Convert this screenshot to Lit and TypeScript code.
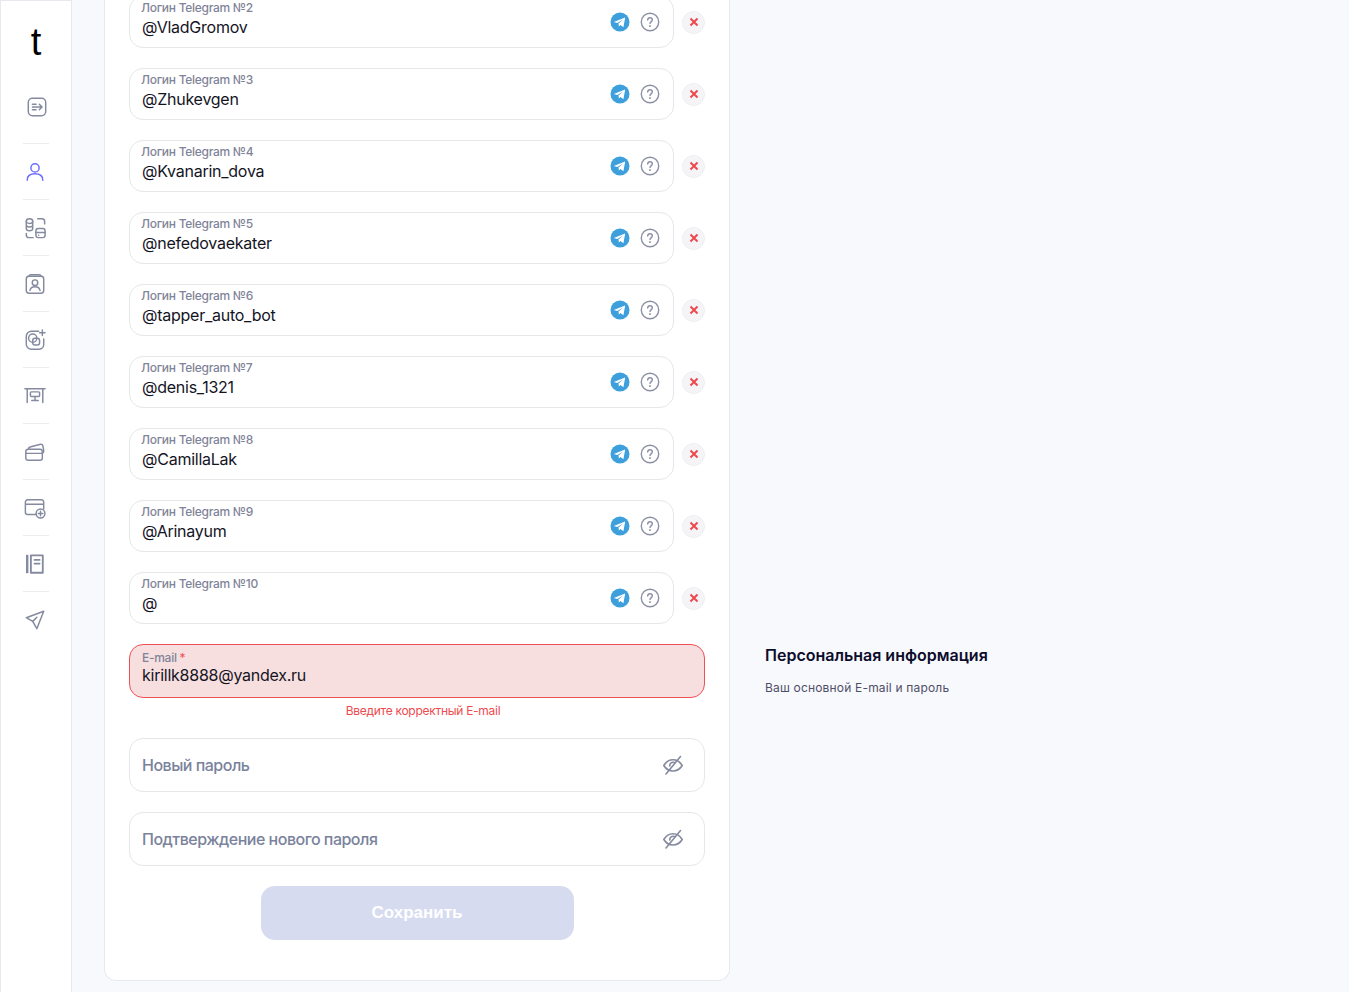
import { LitElement, html, css, svg } from "lit";
import { customElement } from "lit/decorators.js";

const LOGINS = [
  ["Логин Telegram №2", "@VladGromov"],
  ["Логин Telegram №3", "@Zhukevgen"],
  ["Логин Telegram №4", "@Kvanarin_dova"],
  ["Логин Telegram №5", "@nefedovaekater"],
  ["Логин Telegram №6", "@tapper_auto_bot"],
  ["Логин Telegram №7", "@denis_1321"],
  ["Логин Telegram №8", "@CamillaLak"],
  ["Логин Telegram №9", "@Arinayum"],
  ["Логин Telegram №10", "@"],
];

// sidebar icons, all on a 24 box
const NAV = [
  svg`<rect x="2.500" y="2.500" width="19" height="19" rx="4.500"/><path d="M7 9h4M7 12h3M7 15h4M11 12h6.500M14.500 9l3 3-3 3"/>`,
  svg`<circle cx="12" cy="7.500" r="4.500"/><path d="M3.500 21c0-4.500 3.500-7 8.500-7s8.500 2.500 8.500 7"/>`,
  svg`<ellipse cx="6" cy="4.500" rx="3.500" ry="2.500"/><path d="M2.500 4.500v8c0 1.400 1.600 2.500 3.500 2.500s3.500-1.100 3.500-2.500v-8M2.500 8.500c0 1.400 1.600 2.500 3.500 2.500s3.500-1.100 3.500-2.500"/><path d="M15 2h4.500a3 3 0 0 1 3 3v2.500M2.500 18v1.500a3 3 0 0 0 3 3H10"/><rect x="13" y="12.500" width="10" height="10" rx="2.500"/><path d="M13 17h10M16 20h.01"/>`,
  svg`<path d="M5 3.500c.5-1 1.500-1.500 2.500-1.500h9c1 0 2 .5 2.500 1.500"/><rect x="2.500" y="3.500" width="19" height="18.500" rx="3"/><circle cx="12" cy="10.500" r="3"/><path d="M6.500 19c.5-2.800 3-4 5.500-4s5 1.200 5.500 4"/>`,
  svg`<path d="M16 2.500H8A5.500 5.500 0 0 0 2.500 8v8.500A5.500 5.500 0 0 0 8 22h8.500a5 5 0 0 0 5-5v-6"/><circle cx="9.500" cy="10" r="4.500"/><rect x="9.500" y="10" width="7.500" height="7.500" rx="2.500"/><path d="M20 1v6M17 4h6"/>`,
  svg`<path d="M1 4h22M3.500 4v15M20.500 4v15"/><rect x="7" y="7.500" width="10" height="5" rx="1"/><path d="M12 12.500v4.500M8.500 17h7"/>`,
  svg`<path d="M5 9V8.500c0-1 .7-1.800 1.600-2L18 3.600c1.300-.3 2.400.6 2.600 1.800l.9 5.100c.2 1.100-.4 2.200-1.500 2.500"/><rect x="2" y="9" width="18" height="12" rx="2.500"/><path d="M2 13.500h18"/>`,
  svg`<path d="M13 19H4a2.500 2.500 0 0 1-2.500-2.500v-11A2.500 2.500 0 0 1 4 3h15a2.500 2.500 0 0 1 2.500 2.500V13M1.500 8h20"/><circle cx="18" cy="18" r="4.800"/><path d="M18 15.500v5M15.500 18h5"/>`,
  svg`<path d="M3.500 2v20" stroke-width="2.600" stroke-linecap="butt"/><path d="M7.500 2.500h13v19h-13z" stroke-width="2"/><path d="M11.500 7.500h5.500M11.500 11.500h5.500" stroke-width="2"/>`,
  svg`<path d="M21.500 2.500L2.500 9.500l7 4 4.500 8z"/><path d="M9.500 13.500l4.500-4.500"/>`,
];

@customElement("app-root")
export class AppRoot extends LitElement {
  static styles = css`
    :host {
      display: flex;
      height: 992px;
      overflow: hidden;
      background: #f8f9fd;
      font-family: "Inter", "Noto Sans", sans-serif;
      color: #14142b;
    }
    .sidebar {
      box-sizing: border-box;
      flex: none;
      width: 72px;
      height: 992px;
      background: #fff;
      border: 1px solid #e8e9ee;
      border-bottom: 0;
      display: flex;
      flex-direction: column;
      align-items: center;
    }
    .logo {
      font-family: "Liberation Sans", sans-serif;
      font-size: 38px;
      line-height: 44px;
      color: #000;
      margin-top: 19px;
      height: 44px;
    }
    .nav {
      width: 26px;
      display: flex;
      flex-direction: column;
      margin-top: 1px;
    }
    .nav-item {
      box-sizing: border-box;
      height: 56px;
      padding-right: 2px;
      display: flex;
      align-items: center;
      justify-content: center;
      border-bottom: 1px solid #ebecef;
    }
    .nav-item:first-child {
      height: 79px;
      padding: 6px 0 0 2px;
    }
    .nav-item:last-child {
      border-bottom: 0;
    }
    .nav-item svg {
      width: 22px;
      height: 22px;
      fill: none;
      stroke: #848a9f;
      stroke-width: 1.6;
      stroke-linecap: round;
      stroke-linejoin: round;
    }
    .nav-item.active svg {
      stroke: #6c6cff;
    }
    .card {
      box-sizing: border-box;
      flex: none;
      width: 626px;
      height: 982px;
      margin-left: 32px;
      margin-top: -1px;
      padding: 0 24px;
      background: #fff;
      border: 1px solid #e8e9ee;
      border-top: 0;
      border-radius: 0 0 12px 12px;
      display: flex;
      flex-direction: column;
    }
    .logins {
      margin-top: -3px;
      display: flex;
      flex-direction: column;
      gap: 20px;
    }
    .login-row {
      display: flex;
      align-items: center;
      gap: 8px;
    }
    .box {
      box-sizing: border-box;
      position: relative;
      border: 1px solid #e6e7eb;
      border-radius: 14px;
      background: #fff;
    }
    .login {
      flex: none;
      width: 545px;
      height: 52px;
      padding: 0 12px;
      display: flex;
      align-items: center;
      gap: 10px;
    }
    .login .text {
      flex: 1;
      align-self: flex-start;
      padding-top: 3px;
    }
    .label {
      font-size: 12px;
      line-height: 16px;
      font-weight: 500;
      letter-spacing: -0.28px;
      color: #7f8499;
      margin-left: -1px;
    }
    .value {
      font-size: 16px;
      line-height: 20px;
      letter-spacing: -0.25px;
      margin-top: 1px;
      color: #14141f;
    }
    .email .value {
      margin-top: -1px;
    }
    .icon {
      flex: none;
      width: 20px;
      height: 20px;
      display: block;
    }
    .help {
      margin-right: 1px;
    }
    .remove {
      flex: none;
      width: 23px;
      height: 23px;
      border-radius: 50%;
      background: #f5f5f7;
      border: 1px solid #eeeef1;
      box-sizing: border-box;
      display: flex;
      align-items: center;
      justify-content: center;
    }
    .email {
      height: 54px;
      margin-top: 20px;
      padding: 5px 12px 0;
      background: #f8dfdf;
      border-color: #ee5055;
    }
    .email .label {
      margin-left: 0;
    }
    .email .label b {
      color: #ee5055;
      font-weight: 400;
    }
    .error {
      font-size: 12px;
      line-height: 16px;
      letter-spacing: -0.28px;
      color: #ee4b4f;
      text-align: center;
      margin: 5px 0 19px;
      padding-left: 12px;
    }
    .pass {
      height: 54px;
      margin-bottom: 20px;
      padding: 0 21px 0 12px;
      display: flex;
      align-items: center;
      justify-content: space-between;
      font-size: 16px;
      font-weight: 500;
      letter-spacing: -0.5px;
      color: #7a829c;
    }
    .save {
      align-self: center;
      width: 313px;
      height: 54px;
      border: 0;
      border-radius: 14px;
      background: #d6dbf0;
      color: #fff;
      font: 700 17px "Liberation Sans", sans-serif;
    }
    .aside {
      margin-left: 35px;
      padding-top: 645px;
    }
    .aside h2 {
      margin: 0;
      font-size: 16px;
      line-height: 20px;
      font-weight: 600;
      color: #0c0c2c;
    }
    .aside p {
      margin: 15px 0 0;
      font-size: 12px;
      line-height: 16px;
      letter-spacing: 0.18px;
      color: #4e4e68;
    }
  `;

  telegramIcon() {
    return html`<svg class="icon" viewBox="0 0 20 20">
      <circle cx="10" cy="10" r="9.500" fill="#3d9fdc" />
      <path d="M3.800 10l11.400-4.500-1.800 9.700-3-2.300-1.500 1.700-.4-3.200 4.400-3.700-5.700 3.300z" fill="#fff" />
    </svg>`;
  }

  helpIcon() {
    return html`<svg class="icon help" viewBox="0 0 20 20" fill="none" stroke="#8b90a5">
      <circle cx="10" cy="10" r="8.700" stroke-width="1.400" />
      <path d="M7.700 8c0-1.400 1-2.200 2.300-2.200s2.300.8 2.300 2.100c0 1.700-2.300 1.700-2.300 3.500" stroke-width="1.400" stroke-linecap="round" />
      <path d="M10 14v.2" stroke-width="1.800" stroke-linecap="round" />
    </svg>`;
  }

  eyeIcon() {
    return html`<svg width="20" height="20" viewBox="0 0 20 20" fill="none" stroke="#858a9f" stroke-width="1.600" stroke-linecap="round">
      <path d="M.8 10.500C3 6.800 6.200 4.800 10 4.800s7 2 9.200 5.700C17 14 13.800 16 10 16s-7-2-9.200-5.500z" />
      <path d="M6.800 11a3.300 3.300 0 0 1 4.500-3.500" />
      <path d="M17.500 1.500L3 19" />
    </svg>`;
  }

  render() {
    return html`
      <nav class="sidebar">
        <div class="logo">t</div>
        <div class="nav">
          ${NAV.map(
            (icon, i) => html`<div class="nav-item ${i === 1 ? "active" : ""}">
              <svg viewBox="0 0 24 24">${icon}</svg>
            </div>`
          )}
        </div>
      </nav>
      <main class="card">
        <div class="logins">
          ${LOGINS.map(
            ([label, value]) => html`<div class="login-row">
              <div class="box login">
                <div class="text">
                  <div class="label">${label}</div>
                  <div class="value">${value}</div>
                </div>
                ${this.telegramIcon()} ${this.helpIcon()}
              </div>
              <div class="remove">
                <svg width="10" height="10" viewBox="0 0 10 10" stroke="#f0484e" stroke-width="2">
                  <path d="M1.500 1.500l7 7M8.500 1.500l-7 7" />
                </svg>
              </div>
            </div>`
          )}
        </div>
        <div class="box email">
          <div class="label">E-mail <b>*</b></div>
          <div class="value">kirillk8888@yandex.ru</div>
        </div>
        <div class="error">Введите корректный E-mail</div>
        <div class="box pass"><span>Новый пароль</span>${this.eyeIcon()}</div>
        <div class="box pass"><span>Подтверждение нового пароля</span>${this.eyeIcon()}</div>
        <button class="save">Сохранить</button>
      </main>
      <aside class="aside">
        <h2>Персональная информация</h2>
        <p>Ваш основной E-mail и пароль</p>
      </aside>
    `;
  }
}
